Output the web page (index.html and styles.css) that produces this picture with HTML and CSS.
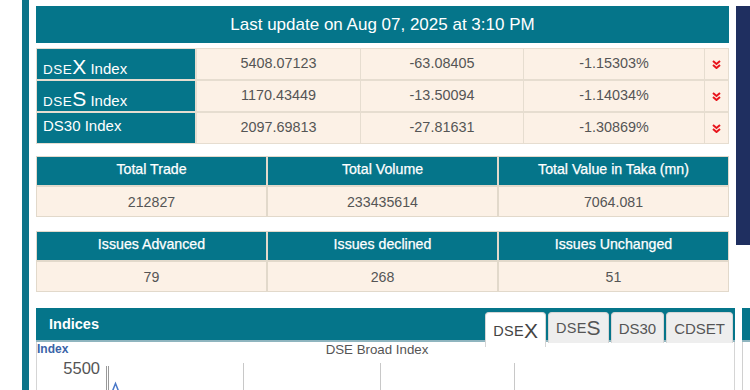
FILE: index.html
```html
<!DOCTYPE html>
<html lang="en">
<head>
<meta charset="utf-8">
<title>DSE Market Summary</title>
<link rel="stylesheet" href="styles.css">
</head>
<body>
<div class="page">
  <div class="rail"></div>
  <div class="content">
    <div class="top">
      <div class="main">
        <div class="update">Last update on Aug 07, 2025 at 3:10 PM</div>
        <div class="idx">
          <div class="row">
            <div class="lbl two"><span class="sm">DSE</span><span class="lg">X</span> Index</div>
            <div class="val first">5408.07123</div>
            <div class="val">-63.08405</div>
            <div class="val">-1.15303%</div>
            <div class="arr"><svg width="9" height="9" viewBox="0 0 9 9"><polyline points="1,1 4.5,4 8,1"/><polyline points="1,5 4.5,8 8,5"/></svg></div>
          </div>
          <div class="row">
            <div class="lbl two"><span class="sm">DSE</span><span class="lg">S</span> Index</div>
            <div class="val first">1170.43449</div>
            <div class="val">-13.50094</div>
            <div class="val">-1.14034%</div>
            <div class="arr"><svg width="9" height="9" viewBox="0 0 9 9"><polyline points="1,1 4.5,4 8,1"/><polyline points="1,5 4.5,8 8,5"/></svg></div>
          </div>
          <div class="row">
            <div class="lbl one">DS30 Index</div>
            <div class="val first">2097.69813</div>
            <div class="val">-27.81631</div>
            <div class="val">-1.30869%</div>
            <div class="arr"><svg width="9" height="9" viewBox="0 0 9 9"><polyline points="1,1 4.5,4 8,1"/><polyline points="1,5 4.5,8 8,5"/></svg></div>
          </div>
        </div>
        <div class="sum s1">
          <div class="h">Total Trade</div>
          <div class="h">Total Volume</div>
          <div class="h">Total Value in Taka (mn)</div>
          <div class="d">212827</div>
          <div class="d">233435614</div>
          <div class="d">7064.081</div>
        </div>
        <div class="sum s2">
          <div class="h">Issues Advanced</div>
          <div class="h">Issues declined</div>
          <div class="h">Issues Unchanged</div>
          <div class="d">79</div>
          <div class="d">268</div>
          <div class="d">51</div>
        </div>
      </div>
      <div class="navy"></div>
    </div>
    <div class="bottom">
      <div class="indices">
        <div class="ihead">
          <span class="ititle">Indices</span>
          <ul class="tabs">
            <li class="tab active"><span class="tsm">DSE</span><span class="tlg">X</span></li>
            <li class="tab"><span class="tsm">DSE</span><span class="tlg">S</span></li>
            <li class="tab">DS30</li>
            <li class="tab">CDSET</li>
          </ul>
        </div>
        <div class="ibody">
          <svg class="chart" width="697" height="48" viewBox="0 0 697 48">
            <text class="ylab" x="0" y="11">Index</text>
            <text class="ctitle" x="340" y="12" text-anchor="middle">DSE Broad Index</text>
            <text class="tick" x="63" y="32" text-anchor="end">5500</text>
            <line class="grid" x1="206.5" y1="21" x2="206.5" y2="48"/>
            <line class="grid" x1="343.5" y1="21" x2="343.5" y2="48"/>
            <line class="grid" x1="477.5" y1="21" x2="477.5" y2="48"/>
            <line class="axis" x1="69.5" y1="24" x2="69.5" y2="48"/>
            <line class="axis" x1="71.5" y1="24" x2="71.5" y2="48"/>
            <polyline class="series" points="75.5,49 78.5,41.5 81.5,49"/>
          </svg>
        </div>
      </div>
      <div class="side2">
        <div class="shead"></div>
        <div class="sbody"></div>
      </div>
    </div>
  </div>
</div>
</body>
</html>
```
FILE: styles.css
```css
html, body {
  margin: 0;
  padding: 0;
  background: #fff;
  overflow: hidden;
}
body {
  font-family: "Liberation Sans", Arial, sans-serif;
  color: #555;
}
.page {
  display: flex;
  width: 750px;
  height: 390px;
  overflow: hidden;
}
.rail {
  flex: none;
  width: 7px;
  margin-left: 22px;
  background: #0b7489;
}
.content {
  flex: none;
  margin-left: 7px;
  padding-top: 6px;
  display: flex;
  flex-direction: column;
}
.top {
  display: flex;
  gap: 7px;
}
.main {
  flex: none;
  width: 693px;
}
.navy {
  flex: none;
  width: 200px;
  height: 239px;
  background: #1f2f60;
}
.update {
  height: 37px;
  background: #05758a;
  color: #fff;
  font-size: 17px;
  display: flex;
  align-items: center;
  justify-content: center;
}
.idx {
  margin-top: 5px;
}
.row {
  display: grid;
  grid-template-columns: 160px 165px 163px 181px 24px;
  height: 32px;
}
.row > div {
  box-sizing: border-box;
  border: 1px solid #e6ddd0;
}
.lbl {
  background: #05758a;
  color: #fff;
  font-size: 15px;
  line-height: 17px;
  padding-left: 6px;
  white-space: nowrap;
}
.lbl.two { padding-top: 9px; }
.lbl.one { padding-top: 4px; }
.lbl .sm { font-size: 13.5px; letter-spacing: 0.5px; }
.lbl .lg { font-size: 21px; }
.val, .arr {
  background: #fcf1e6;
  display: flex;
  align-items: center;
  justify-content: center;
}
.val {
  font-size: 14.4px;
  color: #555;
  padding-bottom: 3px;
  box-sizing: border-box;
}
.row > .val + .val, .row > .arr {
  border-left: 0;
}
.arr svg polyline {
  fill: none;
  stroke: #e8141c;
  stroke-width: 2;
}
.sum {
  display: grid;
  grid-template-columns: repeat(3, 231px);
}
.s1 { margin-top: 12px; }
.s2 { margin-top: 14px; }
.sum > div {
  box-sizing: border-box;
  border: 1px solid #e2d9cb;
  display: flex;
  align-items: center;
  justify-content: center;
  font-size: 14.2px;
}
.sum .h {
  height: 30px;
  background: #05758a;
  color: #fff;
  padding-bottom: 4px;
  -webkit-text-stroke: 0.25px #fff;
}
.sum .d {
  height: 31px;
  background: #fcf1e6;
  color: #555;
}
.bottom {
  display: flex;
  gap: 7px;
  margin-top: 16px;
}
.indices {
  flex: none;
  width: 699px;
  position: relative;
}
.ihead {
  height: 32px;
  background: #05758a;
  border-bottom: 2px solid #8fb5bf;
}
.ititle {
  display: block;
  padding-left: 13px;
  line-height: 32px;
  color: #fff;
  font-weight: bold;
  font-size: 14.5px;
}
.tabs {
  position: absolute;
  top: 4px;
  right: 2px;
  margin: 0;
  padding: 0;
  list-style: none;
  display: flex;
  gap: 2px;
}
.tab {
  box-sizing: border-box;
  height: 31px;
  border: 1px solid #d6d6d6;
  border-bottom: 0;
  border-radius: 4px 4px 0 0;
  background: #eeeeee;
  color: #555;
  font-size: 15px;
  padding: 0 7px;
  display: flex;
  align-items: center;
}
.tab.active {
  height: 35px;
  background: #fff;
  color: #444;
  padding-top: 2px;
}
.tab .tsm { font-size: 14.5px; letter-spacing: 0.3px; }
.tab .tlg { font-size: 21px; }
.ibody {
  height: 60px;
  border: 1px solid #d5d5d5;
  border-top: 0;
  background: #fff;
}
.chart {
  display: block;
}
.chart text {
  font-family: "Liberation Sans", Arial, sans-serif;
}
.ylab { font-size: 12px; font-weight: bold; fill: #3a64a8; }
.ctitle { font-size: 13.3px; fill: #555; }
.tick { font-size: 16.5px; fill: #555; }
.grid { stroke: #c8c8c8; stroke-width: 1; }
.axis { stroke: #999; stroke-width: 1; }
.series { fill: none; stroke: #4a78c8; stroke-width: 1.5; }
.side2 {
  flex: none;
  width: 200px;
}
.shead {
  height: 32px;
  background: #05758a;
  border-bottom: 2px solid #8fb5bf;
}
.sbody {
  height: 60px;
  border-left: 1px solid #d0d0d0;
  background: #fff;
}
```
